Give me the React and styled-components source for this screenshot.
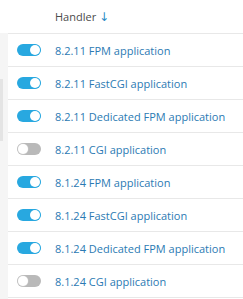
import React from 'react';
import styled, { createGlobalStyle } from 'styled-components';

const GlobalStyle = createGlobalStyle`
  html, body {
    margin: 0;
    padding: 0;
    background: #fff;
  }
  body {
    font-family: "Open Sans", "Liberation Sans", sans-serif;
    font-size: 11px;
    color: #333;
  }
`;

const handlers = [
  { name: '8.2.11 FPM application', on: true },
  { name: '8.2.11 FastCGI application', on: true },
  { name: '8.2.11 Dedicated FPM application', on: true },
  { name: '8.2.11 CGI application', on: false },
  { name: '8.1.24 FPM application', on: true },
  { name: '8.1.24 FastCGI application', on: true },
  { name: '8.1.24 Dedicated FPM application', on: true },
  { name: '8.1.24 CGI application', on: false },
];

const Page = () => (
  <>
    <GlobalStyle />
    <Layout>
      <Gutter>
        <Thumb />
      </Gutter>
      <Table>
        <HeaderRow>
          <ToggleCell />
          <HeaderTitle>
            Handler <SortArrow>↓</SortArrow>
          </HeaderTitle>
        </HeaderRow>
        {handlers.map((h) => (
          <Row key={h.name}>
            <ToggleCell>
              <Switch $on={h.on}>
                <Knob $on={h.on} />
              </Switch>
            </ToggleCell>
            <Link href="#">{h.name}</Link>
          </Row>
        ))}
      </Table>
    </Layout>
  </>
);

const Layout = styled.div`
  display: flex;
  width: 243px;
  height: 299px;
  overflow: hidden;
`;

const Gutter = styled.div`
  flex: 0 0 8px;
  margin-top: 33px;
  background: #f5f5f5;
`;

const Thumb = styled.div`
  width: 3px;
  height: 62px;
  margin-top: 46px;
  background: #e4e4e4;
`;

const Table = styled.div`
  flex: 1;
  display: flex;
  flex-direction: column;
`;

const Row = styled.div`
  display: flex;
  align-items: center;
  height: 32px;
  border-bottom: 1px solid #e8e8e8;
`;

const HeaderRow = styled(Row)`
  height: 33px;
`;

const ToggleCell = styled.div`
  flex: 0 0 47px;
  display: flex;
  align-items: center;
  padding-left: 9px;
  box-sizing: border-box;
`;

const HeaderTitle = styled.div`
  color: #4b4b4b;
  font-size: 11px;
`;

const SortArrow = styled.span`
  color: #2a8bc4;
  font-family: "DejaVu Sans", sans-serif;
  font-size: 12px;
`;

const Switch = styled.span`
  position: relative;
  display: inline-block;
  width: 24px;
  height: 12px;
  border-radius: 6px;
  background: ${(p) => (p.$on ? '#28a8e0' : '#b9b9b9')};
`;

const Knob = styled.span`
  position: absolute;
  top: 1px;
  left: ${(p) => (p.$on ? '13px' : '1px')};
  width: 10px;
  height: 10px;
  border-radius: 50%;
  background: #fff;
  box-shadow: 0 0 0 0.5px ${(p) => (p.$on ? '#28a8e0' : '#cfcfcf')};
`;

const Link = styled.a`
  color: #2b7ab3;
  text-decoration: none;
  font-size: 11px;
  white-space: nowrap;
`;

export default Page;
